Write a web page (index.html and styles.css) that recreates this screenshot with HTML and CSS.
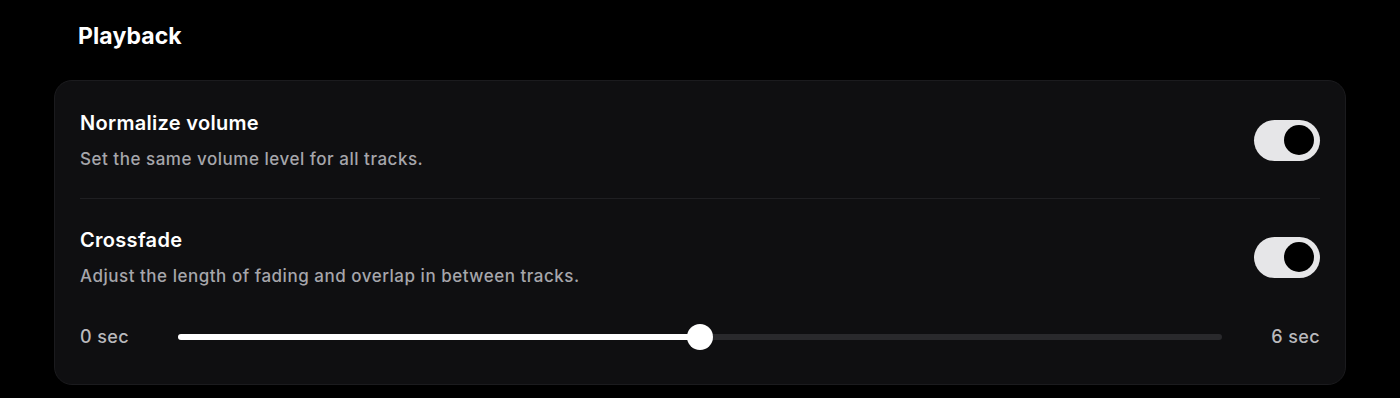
FILE: index.html
```html
<!DOCTYPE html>
<html lang="en">
<head>
<meta charset="utf-8">
<title>Playback settings</title>
<link rel="stylesheet" href="styles.css">
</head>
<body>
<section class="section">
  <h2 class="section-title">Playback</h2>
  <div class="card">
    <div class="row row-first">
      <div class="row-text">
        <div class="row-title">Normalize volume</div>
        <div class="row-desc">Set the same volume level for all tracks.</div>
      </div>
      <div class="toggle is-on" role="switch" aria-checked="true"><span class="knob"></span></div>
    </div>
    <div class="row row-second">
      <div class="row-text">
        <div class="row-title">Crossfade</div>
        <div class="row-desc">Adjust the length of fading and overlap in between tracks.</div>
      </div>
      <div class="toggle is-on" role="switch" aria-checked="true"><span class="knob"></span></div>
    </div>
    <div class="slider-row">
      <span class="slider-label">0 sec</span>
      <div class="slider">
        <div class="slider-track"></div>
        <div class="slider-fill" style="width: 50%"></div>
        <div class="slider-thumb" style="left: 50%"></div>
      </div>
      <span class="slider-label slider-label-end">6 sec</span>
    </div>
  </div>
</section>
</body>
</html>
```
FILE: styles.css
```css
* { box-sizing: border-box; }

html, body {
  margin: 0;
  padding: 0;
  background: #000;
}

body {
  font-family: "Inter", "Noto Sans", "Liberation Sans", sans-serif;
  color: #fff;
}

.section {
  padding: 21px 54px 0 54px;
}

.section-title {
  margin: 0 0 29px 24px;
  font-size: 23px;
  line-height: 30px;
  font-weight: 700;
  letter-spacing: 0.1px;
  color: #fff;
}

.card {
  background: #0f0f11;
  border: 1px solid #1b1b1e;
  border-radius: 18px;
  padding: 28px 25px 34px 25px;
}

.row {
  display: flex;
  align-items: center;
  justify-content: space-between;
}

.row-first {
  padding-bottom: 27px;
  border-bottom: 1px solid #1f1f22;
}

.row-second {
  padding-top: 27px;
}

.row-title {
  font-size: 20px;
  line-height: 28px;
  font-weight: 600;
  color: #fff;
  letter-spacing: 0.3px;
}

.row-desc {
  margin-top: 10px;
  font-size: 17px;
  line-height: 24px;
  font-weight: 500;
  color: #a6a6ab;
  letter-spacing: 0.52px;
}

.toggle {
  position: relative;
  width: 66px;
  height: 41px;
  border-radius: 21px;
  background: #e6e6e8;
  flex: none;
}

.knob {
  position: absolute;
  top: 5.5px;
  right: 6px;
  width: 30px;
  height: 30px;
  border-radius: 50%;
  background: #000;
}

.slider-row {
  margin-top: 36px;
  display: grid;
  grid-template-columns: 98px 1fr 98px;
  align-items: center;
  height: 26px;
}

.slider-label {
  font-size: 18px;
  line-height: 26px;
  font-weight: 500;
  color: #b9b9bd;
  letter-spacing: 0.4px;
}

.slider-label-end {
  text-align: right;
}

.slider {
  position: relative;
  height: 26px;
}

.slider-track {
  position: absolute;
  left: 0;
  right: 0;
  top: 10px;
  height: 6px;
  border-radius: 3px;
  background: #29292c;
}

.slider-fill {
  position: absolute;
  left: 0;
  top: 10px;
  height: 6px;
  border-radius: 3px;
  background: #fff;
}

.slider-thumb {
  position: absolute;
  top: 0;
  width: 26px;
  height: 26px;
  margin-left: -13px;
  border-radius: 50%;
  background: #fff;
}
```
